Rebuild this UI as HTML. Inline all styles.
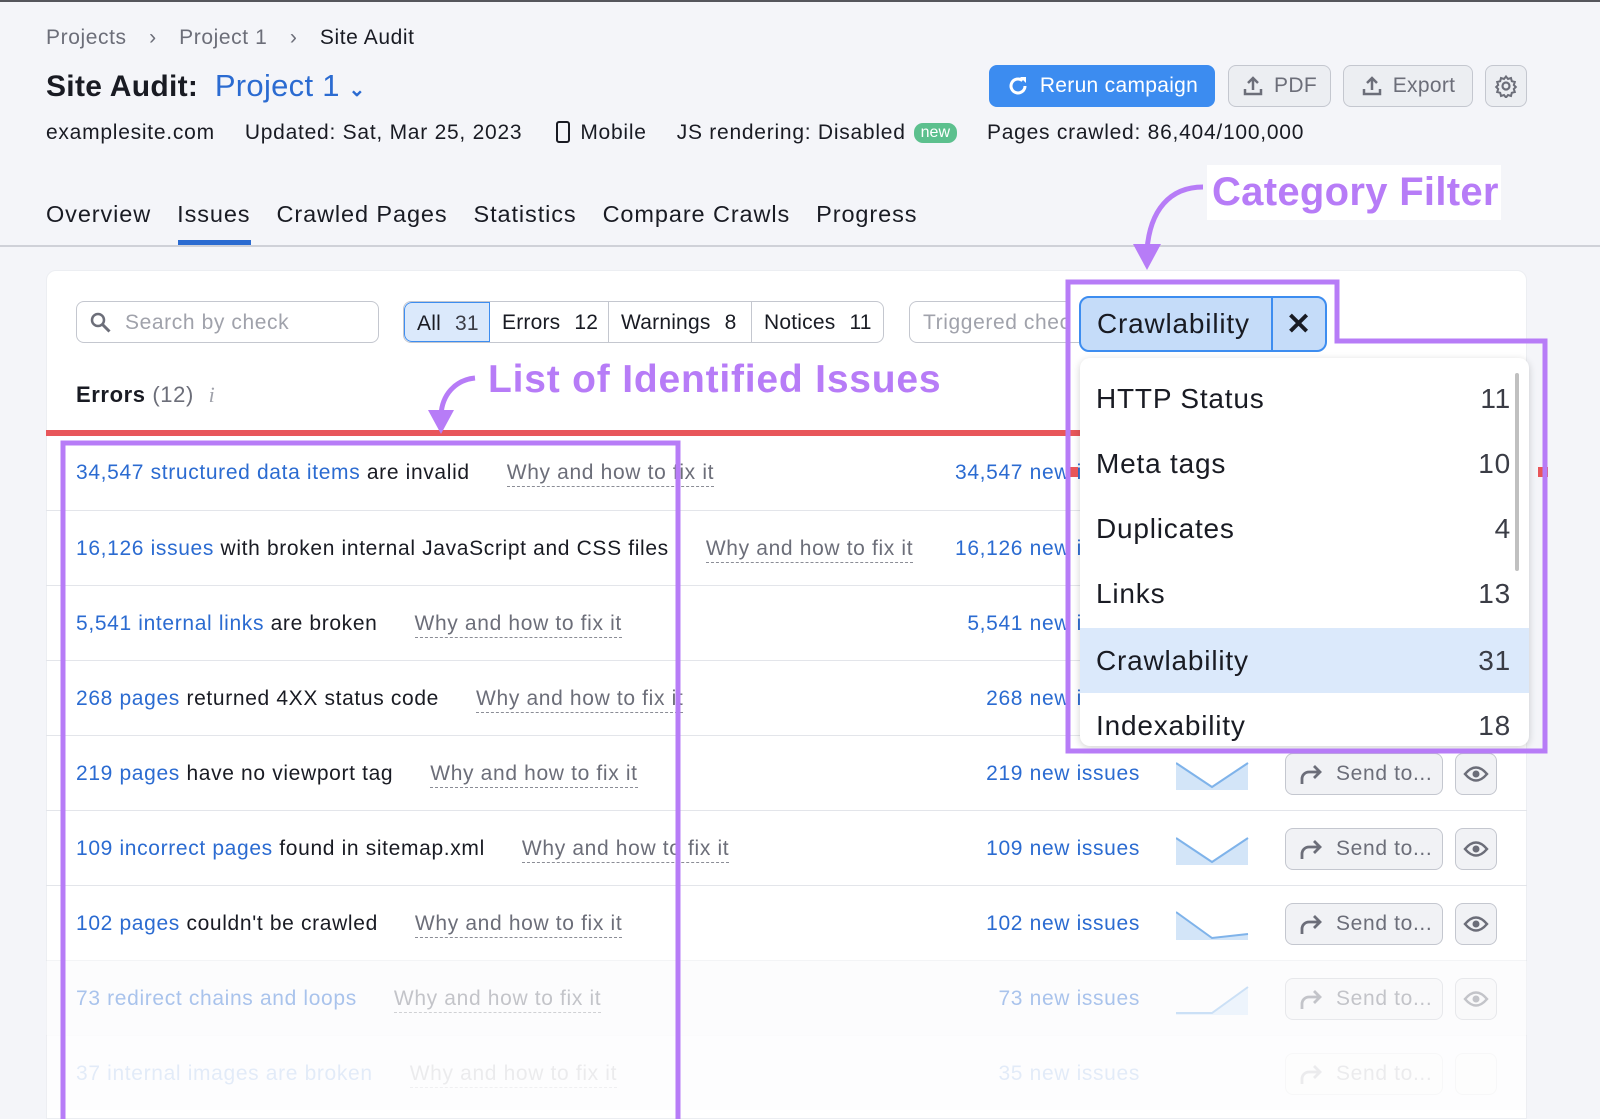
<!DOCTYPE html>
<html><head><meta charset="utf-8"><style>
*{box-sizing:border-box;margin:0;padding:0}
body{width:1600px;height:1119px;overflow:hidden;background:#f4f5f9;font-family:"Liberation Sans",sans-serif;color:#191b23;position:relative;letter-spacing:0.6px}
.a{position:absolute;white-space:nowrap}
.g{color:#6c6e79}
.blue{color:#2b6bd1}
.btn{position:absolute;border:1px solid #c4c7cf;background:#eceef2;border-radius:8px;display:flex;align-items:center;justify-content:center;color:#6c6e79;font-size:21px;gap:10px;letter-spacing:0.3px}
.row{position:absolute;left:46px;width:1481px;height:75px;border-top:1px solid #e3e5ea;font-size:21px;letter-spacing:0.65px}
.row .t{position:absolute;left:30px;top:26px;white-space:nowrap}
.why{margin-left:37px;color:#6c6e79;border-bottom:1.5px dashed #8b8d96;padding-bottom:2px}
.cnt{position:absolute;right:387px;top:26px;color:#2b6bd1}
.sp{position:absolute;left:1130px;top:24px}
.send{position:absolute;left:1239px;top:17px;width:158px;height:42px;border:1px solid #c4c7cf;background:#f1f2f5;border-radius:8px;color:#6c6e79;font-size:21px;display:flex;align-items:center;padding-left:12px;gap:12px}
.eye{position:absolute;left:1409px;top:17px;width:42px;height:42px;border:1px solid #c4c7cf;background:#f1f2f5;border-radius:8px;display:flex;align-items:center;justify-content:center}
.pur{color:#b77cf7;font-weight:bold}
.dd{position:absolute;left:1080px;top:358px;width:449px;height:388px;background:#fff;border-radius:10px;box-shadow:0 2px 8px rgba(0,0,0,.18);overflow:hidden}
.di{position:absolute;left:0;width:449px;height:65px;font-size:28px;padding:0 18px 0 16px;display:flex;justify-content:space-between;align-items:center;letter-spacing:0.8px}
.di span:last-child{color:#3a3c45}
</style></head><body>
<div class="a" style="left:0;top:0;width:1600px;height:2px;background:#55565c"></div>
<div class="a g" style="left:46px;top:26px;font-size:21px">Projects <span style="margin:0 16px">›</span> Project 1 <span style="margin:0 16px">›</span> <span style="color:#191b23">Site Audit</span></div>
<div class="a" style="left:46px;top:68px;font-size:30px;font-weight:bold;letter-spacing:0.3px">Site Audit: <span class="blue" style="margin-left:8px;font-weight:normal;font-size:31px">Project 1</span> <span class="blue" style="font-size:20px">⌄</span></div>
<div class="a" style="left:46px;top:121px;font-size:21px;letter-spacing:0.75px">examplesite.com<span style="margin-left:30px">Updated: Sat, Mar 25, 2023</span><span style="display:inline-block;width:14px;height:22px;border:2.5px solid #191b23;border-radius:3px;margin:0 10px 0 34px;vertical-align:-4px"></span>Mobile<span style="margin-left:30px">JS rendering: Disabled</span><span style="display:inline-block;background:#5cc08e;color:#fff;font-size:16px;border-radius:9px;padding:1px 7px;margin-left:8px;vertical-align:2px;letter-spacing:0">new</span><span style="margin-left:30px">Pages crawled: 86,404/100,000</span></div>
<div class="btn" style="left:989px;top:65px;width:226px;height:42px;background:#3c8cf0;border-color:#3c8cf0;color:#fff"><svg width="24" height="24" viewBox="0 0 24 24"><path d="M19 12a7 7 0 1 1-2.5-5.4" fill="none" stroke="#fff" stroke-width="3"/><path d="M14 3h6v6z" fill="#fff"/></svg>Rerun campaign</div>
<div class="btn" style="left:1228px;top:65px;width:103px;height:42px"><svg width="22" height="22" viewBox="0 0 22 22"><path d="M11 15V3M6 8l5-5 5 5M3 14v5h16v-5" fill="none" stroke="#6c6e79" stroke-width="2.5"/></svg>PDF</div>
<div class="btn" style="left:1343px;top:65px;width:130px;height:42px"><svg width="22" height="22" viewBox="0 0 22 22"><path d="M11 15V3M6 8l5-5 5 5M3 14v5h16v-5" fill="none" stroke="#6c6e79" stroke-width="2.5"/></svg>Export</div>
<div class="btn" style="left:1485px;top:65px;width:42px;height:42px"><svg width="24" height="24" viewBox="0 0 24 24"><circle cx="12" cy="12" r="3.5" fill="none" stroke="#6c6e79" stroke-width="2.2"/><path d="M12 2.5l2 2.5 3-1 .8 3.2 3 .8-1 3 2 2-2 2 1 3-3 .8-.8 3.2-3-1-2 2.5-2-2.5-3 1-.8-3.2-3-.8 1-3-2-2 2-2-1-3 3-.8.8-3.2 3 1z" fill="none" stroke="#6c6e79" stroke-width="2"/></svg></div>
<div class="a" style="left:46px;top:201px;font-size:23.5px;letter-spacing:0.9px">Overview<span style="margin-left:26px">Issues</span><span style="margin-left:26px">Crawled Pages</span><span style="margin-left:26px">Statistics</span><span style="margin-left:26px">Compare Crawls</span><span style="margin-left:26px">Progress</span></div>
<div class="a" style="left:178px;top:240px;width:73px;height:5px;background:#2b6bd1"></div>
<div class="a" style="left:0;top:245px;width:1600px;height:2px;background:#cfd1d8"></div>
<div class="a" style="left:46px;top:270px;width:1481px;height:849px;background:#fff;border-radius:10px 10px 0 0;border:1px solid #eceef2"></div>
<div class="a" style="left:76px;top:301px;width:303px;height:42px;border:1px solid #c4c7cf;border-radius:8px;font-size:21px;color:#a0a2ab;padding:9px 0 0 48px">Search by check</div>
<svg class="a" style="left:89px;top:311px" width="24" height="24" viewBox="0 0 24 24"><circle cx="9" cy="9" r="6" fill="none" stroke="#6c6e79" stroke-width="2.5"/><path d="M13.5 13.5l7 7" stroke="#6c6e79" stroke-width="3"/></svg>
<div class="a" style="left:403px;top:301px;width:481px;height:42px;border:1px solid #c4c7cf;border-radius:8px;display:flex;font-size:21px;overflow:hidden;letter-spacing:0.2px">
<div style="width:86px;background:#dbe9fb;border:1px solid #3d8df0;border-radius:8px 0 0 8px;padding:9px 0 0 12px">All <span style="color:#3a3c45;margin-left:8px">31</span></div>
<div style="width:119px;border-right:1px solid #c4c7cf;padding:9px 0 0 12px">Errors <span style="margin-left:8px">12</span></div>
<div style="width:143px;border-right:1px solid #c4c7cf;padding:9px 0 0 12px">Warnings <span style="margin-left:8px">8</span></div>
<div style="padding:9px 0 0 12px">Notices <span style="margin-left:8px">11</span></div></div>
<div class="a" style="left:909px;top:301px;width:200px;height:42px;border:1px solid #c4c7cf;border-radius:8px;font-size:21px;color:#a0a2ab;padding:9px 0 0 13px;overflow:hidden">Triggered checks</div>
<div class="a" style="left:76px;top:382px;font-size:22px"><b>Errors</b> <span class="g">(12)</span> <i style="color:#a0a2ab;margin-left:8px;font-family:'Liberation Serif',serif">i</i></div>
<div class="a" style="left:46px;top:430px;width:1481px;height:6px;background:#e8565a"></div>

<div class="row" style="top:435px;border-top:none"><div class="t"><span class="blue">34,547 structured data items</span> are invalid<span class="why">Why and how to fix it</span></div><div class="cnt">34,547 new issues</div></div>
<div class="row" style="top:510px"><div class="t"><span class="blue">16,126 issues</span> with broken internal JavaScript and CSS files<span class="why">Why and how to fix it</span></div><div class="cnt">16,126 new issues</div></div>
<div class="row" style="top:585px"><div class="t"><span class="blue">5,541 internal links</span> are broken<span class="why">Why and how to fix it</span></div><div class="cnt">5,541 new issues</div></div>
<div class="row" style="top:660px"><div class="t"><span class="blue">268 pages</span> returned 4XX status code<span class="why">Why and how to fix it</span></div><div class="cnt">268 new issues</div></div>
<div class="row" style="top:735px"><div class="t"><span class="blue">219 pages</span> have no viewport tag<span class="why">Why and how to fix it</span></div><div class="cnt">219 new issues</div>
<svg class="sp" width="74" height="30"><path d="M0 3L36 27L72 3V30H0Z" fill="#d3e5f8"/><path d="M0 3L36 27L72 3" fill="none" stroke="#7fb3ea" stroke-width="2"/></svg>
<div class="send"><svg width="26" height="24" viewBox="0 0 26 24"><path d="M4 22v-5a7 7 0 0 1 7-7h11M16 4l6 6-6 6" fill="none" stroke="#6c6e79" stroke-width="2.8"/></svg>Send to...</div><div class="eye"><svg width="26" height="18" viewBox="0 0 26 18"><path d="M2 9Q13-4 24 9Q13 22 2 9Z" fill="none" stroke="#6c6e79" stroke-width="2.5"/><circle cx="13" cy="9" r="3.5" fill="#6c6e79"/></svg></div></div>
<div class="row" style="top:810px"><div class="t"><span class="blue">109 incorrect pages</span> found in sitemap.xml<span class="why">Why and how to fix it</span></div><div class="cnt">109 new issues</div>
<svg class="sp" width="74" height="30"><path d="M0 3L36 27L72 3V30H0Z" fill="#d3e5f8"/><path d="M0 3L36 27L72 3" fill="none" stroke="#7fb3ea" stroke-width="2"/></svg>
<div class="send"><svg width="26" height="24" viewBox="0 0 26 24"><path d="M4 22v-5a7 7 0 0 1 7-7h11M16 4l6 6-6 6" fill="none" stroke="#6c6e79" stroke-width="2.8"/></svg>Send to...</div><div class="eye"><svg width="26" height="18" viewBox="0 0 26 18"><path d="M2 9Q13-4 24 9Q13 22 2 9Z" fill="none" stroke="#6c6e79" stroke-width="2.5"/><circle cx="13" cy="9" r="3.5" fill="#6c6e79"/></svg></div></div>
<div class="row" style="top:885px"><div class="t"><span class="blue">102 pages</span> couldn't be crawled<span class="why">Why and how to fix it</span></div><div class="cnt">102 new issues</div>
<svg class="sp" width="74" height="30"><path d="M0 2L36 28L72 24V30H0Z" fill="#d3e5f8"/><path d="M0 2L36 28L72 24" fill="none" stroke="#7fb3ea" stroke-width="2"/></svg>
<div class="send"><svg width="26" height="24" viewBox="0 0 26 24"><path d="M4 22v-5a7 7 0 0 1 7-7h11M16 4l6 6-6 6" fill="none" stroke="#6c6e79" stroke-width="2.8"/></svg>Send to...</div><div class="eye"><svg width="26" height="18" viewBox="0 0 26 18"><path d="M2 9Q13-4 24 9Q13 22 2 9Z" fill="none" stroke="#6c6e79" stroke-width="2.5"/><circle cx="13" cy="9" r="3.5" fill="#6c6e79"/></svg></div></div>
<div class="row" style="top:960px;background:#f9f9fb;opacity:.4"><div class="t"><span class="blue">73 redirect chains and loops</span><span class="why">Why and how to fix it</span></div><div class="cnt">73 new issues</div>
<svg class="sp" width="74" height="30"><path d="M0 28L36 28L72 2V30H0Z" fill="#d3e5f8"/><path d="M0 28L36 28L72 2" fill="none" stroke="#7fb3ea" stroke-width="2"/></svg>
<div class="send"><svg width="26" height="24" viewBox="0 0 26 24"><path d="M4 22v-5a7 7 0 0 1 7-7h11M16 4l6 6-6 6" fill="none" stroke="#6c6e79" stroke-width="2.8"/></svg>Send to...</div><div class="eye"><svg width="26" height="18" viewBox="0 0 26 18"><path d="M2 9Q13-4 24 9Q13 22 2 9Z" fill="none" stroke="#6c6e79" stroke-width="2.5"/><circle cx="13" cy="9" r="3.5" fill="#6c6e79"/></svg></div></div>
<div class="row" style="top:1035px;background:#f4f5f9;opacity:.13"><div class="t"><span class="blue">37 internal images are broken</span><span class="why">Why and how to fix it</span></div><div class="cnt">35 new issues</div>
<div class="send"><svg width="26" height="24" viewBox="0 0 26 24"><path d="M4 22v-5a7 7 0 0 1 7-7h11M16 4l6 6-6 6" fill="none" stroke="#6c6e79" stroke-width="2.8"/></svg>Send to...</div><div class="eye"></div></div>

<div class="a" style="left:1066px;top:280px;width:272px;height:60px;background:#fff"></div>
<div class="a" style="left:1079px;top:296px;width:248px;height:56px;background:#c5dcf9;border:2px solid #3d8df0;border-radius:10px;font-size:28px;display:flex;align-items:center;letter-spacing:0.8px"><div style="width:192px;height:100%;border-right:2px solid #3d8df0;padding:10px 0 0 16px">Crawlability</div><div style="flex:1;text-align:center;font-size:30px;font-weight:bold">✕</div></div>
<div class="dd">
<div class="di" style="top:8px"><span>HTTP Status</span><span>11</span></div>
<div class="di" style="top:73px"><span>Meta tags</span><span>10</span></div>
<div class="di" style="top:138px"><span>Duplicates</span><span>4</span></div>
<div class="di" style="top:203px"><span>Links</span><span>13</span></div>
<div class="di" style="top:270px;background:#dbe9fb"><span>Crawlability</span><span>31</span></div>
<div class="di" style="top:335px"><span>Indexability</span><span>18</span></div>
<div style="position:absolute;left:435px;top:15px;width:4px;height:198px;background:#c0c0c0;border-radius:2px"></div>
</div>
<div class="a" style="left:1538px;top:467px;width:10px;height:10px;background:#e8565a"></div>
<div class="a" style="left:1068px;top:467px;width:10px;height:10px;background:#e8565a"></div>

<svg class="a" style="left:0;top:0" width="1600" height="1119">
<path d="M1068 282H1337V341H1545V751H1068Z" fill="none" stroke="#b77cf7" stroke-width="5"/>
<rect x="63" y="443" width="615" height="690" fill="none" stroke="#b77cf7" stroke-width="5"/>
<path d="M1203 187C1170 187 1150 210 1147 250" fill="none" stroke="#b77cf7" stroke-width="5"/>
<path d="M1133 244L1161 244L1147 270Z" fill="#b77cf7"/>
<path d="M475 378C455 380 442 395 441 415" fill="none" stroke="#b77cf7" stroke-width="5"/>
<path d="M428 410L454 410L441 434Z" fill="#b77cf7"/>
</svg>
<div class="a" style="left:1207px;top:165px;width:294px;height:55px;background:#fff"></div>
<div class="a pur" style="left:1212px;top:170px;font-size:40px;letter-spacing:0.3px">Category Filter</div>
<div class="a pur" style="left:488px;top:358px;font-size:39px;letter-spacing:0.8px">List of Identified Issues</div>
</body></html>
